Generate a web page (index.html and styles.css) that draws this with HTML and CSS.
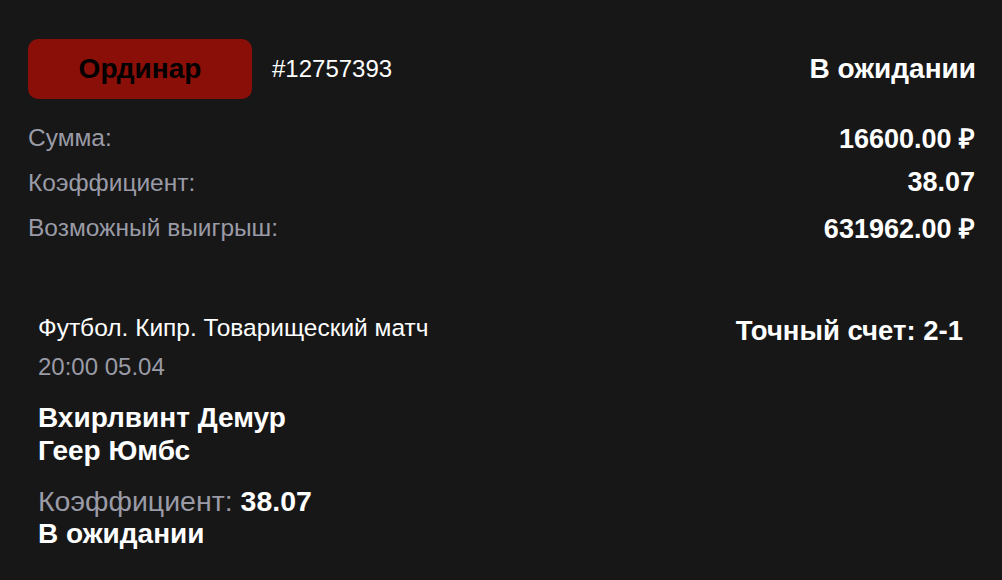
FILE: index.html
```html
<!DOCTYPE html>
<html lang="ru">
<head>
<meta charset="utf-8">
<link rel="stylesheet" href="styles.css">
</head>
<body>
<div class="bet">
  <div class="head">
    <div class="type">Ординар</div>
    <div class="id">#12757393</div>
    <div class="status">В ожидании</div>
  </div>
  <div class="rows">
    <div class="row"><span class="label">Сумма:</span><span class="value">16600.00 ₽</span></div>
    <div class="row"><span class="label">Коэффициент:</span><span class="value">38.07</span></div>
    <div class="row"><span class="label">Возможный выигрыш:</span><span class="value">631962.00 ₽</span></div>
  </div>
  <div class="event">
    <div class="event-top">
      <div class="event-info">
        <div class="league">Футбол. Кипр. Товарищеский матч</div>
        <div class="date">20:00 05.04</div>
      </div>
      <div class="market">Точный счет: 2-1</div>
    </div>
    <div class="teams">
      <div>Вхирлвинт Демур</div>
      <div>Геер Юмбс</div>
    </div>
    <div class="coef"><span class="coef-label">Коэффициент:</span> <b>38.07</b></div>
    <div class="ev-status">В ожидании</div>
  </div>
</div>
</body>
</html>
```
FILE: styles.css
```css
html, body {
  margin: 0;
  padding: 0;
  background: #171717;
}
body {
  font-family: "Liberation Sans", Arial, sans-serif;
  color: #ffffff;
}
.bet {
  padding: 39px 26px 0 28px;
}
.head {
  display: flex;
  align-items: center;
  height: 60px;
}
.type {
  width: 224px;
  height: 60px;
  border-radius: 10px;
  background: #8a0f08;
  color: #000;
  font-weight: bold;
  font-size: 28px;
  display: flex;
  align-items: center;
  justify-content: center;
}
.id {
  margin-left: 20px;
  font-size: 24px;
}
.status {
  margin-left: auto;
  font-weight: bold;
  font-size: 28px;
}
.rows {
  margin-top: 16px;
  display: flex;
  flex-direction: column;
}
.row {
  display: flex;
  justify-content: space-between;
  align-items: center;
  height: 45px;
}
.label {
  color: #9a9ba6;
  font-size: 24.5px;
}
.value {
  font-weight: bold;
  font-size: 27px;
  margin-right: 1px;
}
.event {
  margin-top: 63px;
  padding: 0 13px 0 10px;
}
.event-top {
  display: flex;
  justify-content: space-between;
  align-items: flex-start;
}
.league {
  font-size: 24.5px;
  line-height: 30px;
}
.date {
  margin-top: 9px;
  font-size: 24px;
  line-height: 30px;
  color: #9a9ba6;
}
.market {
  margin-top: 3px;
  font-weight: bold;
  font-size: 27.5px;
  line-height: 30px;
}
.teams {
  margin-top: 19px;
  font-weight: bold;
  font-size: 28px;
  line-height: 33px;
}
.coef {
  margin-top: 18px;
  font-size: 28.5px;
  line-height: 33px;
}
.coef-label {
  color: #9a9ba6;
}
.ev-status {
  font-weight: bold;
  font-size: 28px;
  line-height: 32px;
}
```
